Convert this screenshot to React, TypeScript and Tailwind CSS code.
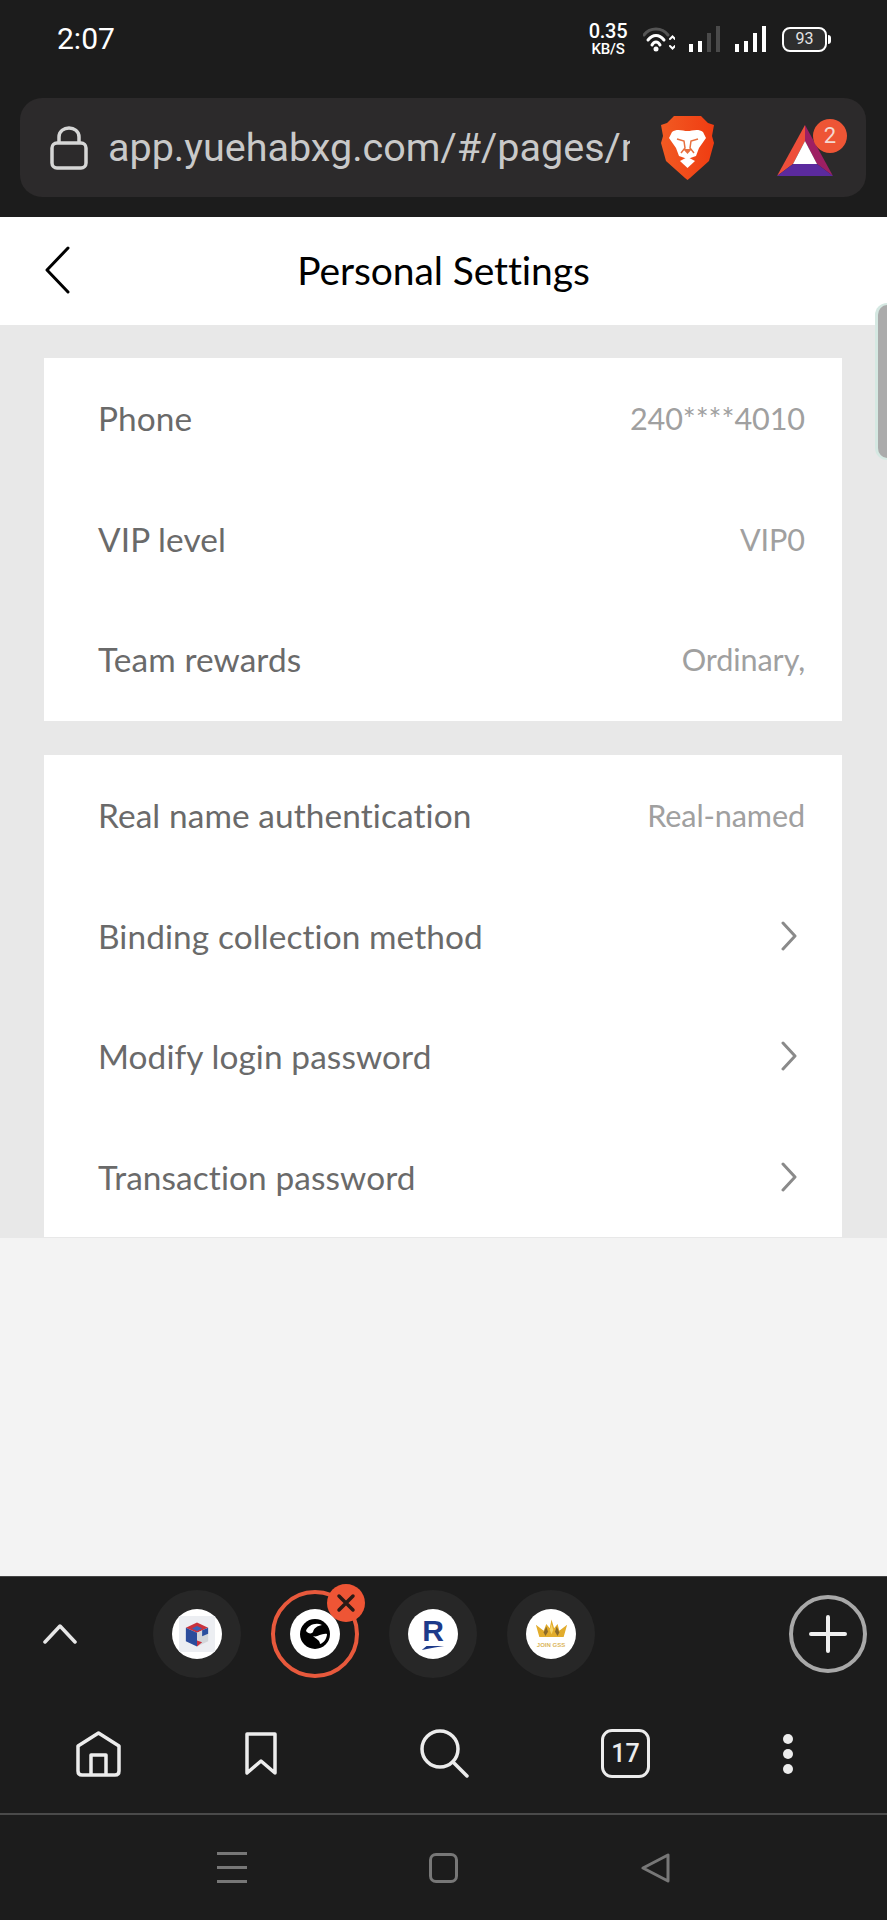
function Row({ label, value, arrow }: { label: string; value?: string; arrow?: boolean }) {
  return (
    <div className="flex h-[120.5px] items-center justify-between pl-[54px] pr-[37px]">
      <span className="text-[33.4px] tracking-[0.1px] text-[#6a6a6a]">{label}</span>
      {value && <span className="pt-[2px] text-[30.6px] tracking-[-0.1px] text-[#a0a0a0]">{value}</span>}
      {arrow && (
        <svg className="mr-[8px]" width="16" height="30" viewBox="0 0 16 30" fill="none" stroke="#8a8a8a" strokeWidth="3" strokeLinecap="round" strokeLinejoin="round">
          <path d="M2 2L14 15L2 28" />
        </svg>
      )}
    </div>
  );
}

function StatusIcons() {
  return (
    <div className="flex items-center">
      <div className="flex w-[42px] flex-col items-center font-['Roboto',sans-serif] font-medium leading-none text-white">
        <span className="h-[16px] text-[20px] leading-[16px] tracking-[-0.3px]">0.35</span>
        <span className="mt-[4px] h-[12px] text-[15px] leading-[12px] tracking-[-0.2px]">KB/S</span>
      </div>
      <svg className="ml-[14px]" width="32" height="26" viewBox="0 0 32 26" fill="none" strokeLinecap="round">
        <path d="M1 9C7 1 19 1 25 9" stroke="#555" strokeWidth="3" />
        <path d="M5 14C10 8 16 8 21 14" stroke="#fff" strokeWidth="3" />
        <path d="M9 19C11 15 15 15 17 19" stroke="#fff" strokeWidth="3" />
        <circle cx="13" cy="23" r="2.5" fill="#fff" />
        <path d="M27 13L29.5 10.5L32 13M27 20L29.5 22.5L32 20" stroke="#fff" strokeWidth="2" />
      </svg>
      <svg className="ml-[14px]" width="32" height="26" viewBox="0 0 32 26">
        <rect x="0" y="18" width="4" height="8" fill="#fff" />
        <rect x="9" y="15" width="4" height="11" fill="#fff" />
        <rect x="18" y="7" width="4" height="19" fill="#4a4a4a" />
        <rect x="27" y="0" width="4" height="26" fill="#4a4a4a" />
      </svg>
      <svg className="ml-[14px]" width="32" height="26" viewBox="0 0 32 26">
        <rect x="0" y="18" width="4" height="8" fill="#fff" />
        <rect x="9" y="15" width="4" height="11" fill="#fff" />
        <rect x="18" y="7" width="4" height="19" fill="#fff" />
        <rect x="27" y="0" width="4" height="26" fill="#fff" />
      </svg>
      <div className="ml-[15px] flex items-center">
        <div className="flex h-[25px] w-[45px] items-center justify-center rounded-[8px] border-2 border-white bg-[#2e2e2e] font-['Roboto',sans-serif] text-[16px] leading-none text-[#e4e4e4]">
          93
        </div>
        <div className="ml-[1px] h-[9px] w-[3px] rounded-r-sm bg-white" />
      </div>
    </div>
  );
}

function BraveLogo() {
  return (
    <svg width="55" height="65" viewBox="0 0 55 65">
      <defs>
        <linearGradient id="brave" x1="0" y1="0" x2="1" y2="0">
          <stop offset="0" stopColor="#f15a22" />
          <stop offset="1" stopColor="#f03c12" />
        </linearGradient>
      </defs>
      <path d="M14 1H41L48 8L54 10L52 21L54 28L49 46L30 63L27.5 65L25 63L6 46L1 28L3 21L1 10L7 8Z" fill="url(#brave)" />
      <path d="M12 17C17 13 23 16 27.5 16C32 16 38 13 43 17L46 23L39 33L36 41L27.5 44L19 41L16 33L9 23Z" fill="#fff" />
      <path d="M17 24L24 26L25 33L21 38M38 24L31 26L30 33L34 38" fill="none" stroke="#e8703f" strokeWidth="1.5" />
      <path d="M23 34H32L27.5 39Z" fill="#e8703f" />
      <path d="M20 46L27.5 42L35 46L27.5 53Z" fill="#fff" />
    </svg>
  );
}

function BatLogo() {
  return (
    <svg width="56" height="51" viewBox="0 0 56 51">
      <path d="M28 0L0 51L16 39L28 16Z" fill="#ee4e3a" />
      <path d="M28 0L56 51L40 39L28 16Z" fill="#9e1f63" />
      <path d="M0 51H56L40 39H16Z" fill="#5b2a9e" />
      <path d="M28 16L16 39H40Z" fill="#fff" />
    </svg>
  );
}

function CubeFavicon() {
  return (
    <div className="flex h-[36px] w-[36px] items-center justify-center bg-[#eceef2]">
      <svg width="24" height="27" viewBox="0 0 28 30">
        <path d="M14 1L27 7L14 13L1 7Z" fill="#c9323d" />
        <path d="M1 7L14 13V29L1 23Z" fill="#2b4c9c" />
        <path d="M27 7L14 13V29L27 23Z" fill="#d3d6da" />
        <path d="M8 8L14 5L20 8L14 11Z" fill="#3a62b8" />
        <path d="M20 10L27 7V14L20 17Z" fill="#2b4f9e" />
        <path d="M14 22L20 24L14 29Z" fill="#c9323d" />
      </svg>
    </div>
  );
}

function GlobeFavicon() {
  return (
    <svg width="32" height="32" viewBox="0 0 32 32">
      <circle cx="16" cy="16" r="15" fill="#000" />
      <path d="M7 13C9 7 17 4 23 7C18 8 15 10 14 14C13 16 9 16 7 13Z" fill="#fff" />
      <path d="M14 18C18 20 22 15 28 16C28 20 25 25 21 26C21 22 17 21 14 18Z" fill="#fff" />
    </svg>
  );
}

function RFavicon() {
  return (
    <div className="flex flex-col items-center">
      <span className="font-['Liberation_Sans',sans-serif] text-[30px] font-bold leading-[26px] text-[#1d3a8a]">R</span>
      <svg className="mt-[2px]" width="24" height="4" viewBox="0 0 28 5">
        <path d="M0 5L6 0H28L16 2Z" fill="#1d3a8a" />
      </svg>
    </div>
  );
}

function CrownFavicon() {
  return (
    <div className="flex flex-col items-center">
      <svg width="33" height="22" viewBox="0 0 38 24">
        <path d="M5 20L1 6L10 13L13 5L17 10L19 0L22 10L26 5L28 13L37 6L33 20Z" fill="#e2ac2c" />
        <path d="M17 12L19 5L21 12L19 17Z" fill="#f7d568" />
        <path d="M10 15L13 8L15 14L12 19Z" fill="#8a6a2a" />
        <path d="M28 15L25 8L23 14L26 19Z" fill="#8a6a2a" />
      </svg>
      <span className="font-['Liberation_Sans',sans-serif] text-[6px] font-bold leading-[8px] text-[#dcb65a]">JOIN GSS</span>
    </div>
  );
}

function TabBubble({ active, children }: { active?: boolean; children: React.ReactNode }) {
  return (
    <div
      className={
        active
          ? 'relative flex h-[88px] w-[88px] items-center justify-center rounded-full border-[4px] border-[#e8593c]'
          : 'relative flex h-[88px] w-[88px] items-center justify-center rounded-full bg-[#272727]'
      }
    >
      <div className="flex h-[50px] w-[50px] items-center justify-center overflow-hidden rounded-full bg-white">{children}</div>
      {active && (
        <div className="absolute -right-[10px] -top-[10px] flex h-[38px] w-[38px] items-center justify-center rounded-full bg-[#ee5535]">
          <svg width="20" height="20" viewBox="0 0 20 20" stroke="#2a1a16" strokeWidth="3.5" strokeLinecap="round">
            <path d="M3 3L17 17M17 3L3 17" />
          </svg>
        </div>
      )}
    </div>
  );
}

export default function App() {
  return (
    <div className="relative flex h-[1920px] w-[887px] flex-col overflow-hidden bg-[#1c1c1c] font-['Lato',sans-serif]">
      {/* Status bar + address bar */}
      <div className="h-[217px] shrink-0 px-[20px]">
        <div className="flex h-[78px] items-center justify-between pl-[37px]">
          <span className="font-['Roboto',sans-serif] text-[30px] leading-none text-white">2:07</span>
          <div className="mr-[36px]">
            <StatusIcons />
          </div>
        </div>
        <div className="mt-[20px] flex h-[99px] w-[846px] items-center rounded-[22px] bg-[#2c2a2b]">
          <svg className="ml-[30px] shrink-0" width="38" height="44" viewBox="0 0 38 44" fill="none" stroke="#d6d6d6" strokeWidth="3.5">
            <rect x="2" y="17" width="34" height="25" rx="5" />
            <path d="M9 17V11C9 -1 29 -1 29 11V17" />
          </svg>
          <div className="ml-[20px] w-[522px] overflow-hidden whitespace-nowrap font-['Roboto',sans-serif] text-[39.5px] leading-[50px] text-[#c9c9c9]">
            app.yuehabxg.com/#/pages/m
          </div>
          <div className="ml-[30px] shrink-0">
            <BraveLogo />
          </div>
          <div className="relative ml-[62px] mt-[6px] shrink-0">
            <BatLogo />
            <div className="absolute -right-[14px] -top-[6px] flex h-[34px] w-[34px] items-center justify-center rounded-full bg-[#ee5535] font-['Roboto',sans-serif] text-[22px] leading-none text-[#f5d8d0]">
              2
            </div>
          </div>
        </div>
      </div>

      {/* Page header */}
      <div className="relative flex h-[108px] shrink-0 items-center justify-center bg-white pb-[2px]">
        <svg className="absolute left-[44px] top-[29px]" width="26" height="48" viewBox="0 0 26 48" fill="none" stroke="#000" strokeWidth="3" strokeLinecap="round" strokeLinejoin="round">
          <path d="M24 2L3 24L24 46" />
        </svg>
        <span className="text-[39px] leading-none tracking-[-0.1px] text-black">Personal Settings</span>
      </div>

      {/* Settings cards */}
      <div className="h-[913px] shrink-0 overflow-hidden bg-[#e8e8e8] pl-[44px] pr-[45px] pt-[33px]">
        <div className="bg-white pb-[1.5px]">
          <Row label="Phone" value="240****4010" />
          <Row label="VIP level" value="VIP0" />
          <Row label="Team rewards" value="Ordinary," />
        </div>
        <div className="mt-[34px] bg-white">
          <Row label="Real name authentication" value="Real-named" />
          <Row label="Binding collection method" arrow />
          <Row label="Modify login password" arrow />
          <Row label="Transaction password" arrow />
        </div>
      </div>

      {/* Blank area under the page */}
      <div className="h-[338px] shrink-0 bg-[#f3f3f3]" />

      {/* Tab strip */}
      <div className="flex h-[118px] shrink-0 items-center border-t border-[#444] pb-[3px]">
        <svg className="ml-[43px]" width="34" height="20" viewBox="0 0 34 20" fill="none" stroke="#e6e6e6" strokeWidth="3.5" strokeLinecap="round" strokeLinejoin="round">
          <path d="M2 18L17 2L32 18" />
        </svg>
        <div className="ml-[76px] flex gap-[30px]">
          <TabBubble>
            <CubeFavicon />
          </TabBubble>
          <TabBubble active>
            <GlobeFavicon />
          </TabBubble>
          <TabBubble>
            <RFavicon />
          </TabBubble>
          <TabBubble>
            <CrownFavicon />
          </TabBubble>
        </div>
        <div className="ml-[194px] flex h-[78px] w-[78px] items-center justify-center rounded-full border-[4px] border-[#a8a8a8]">
          <svg width="40" height="40" viewBox="0 0 40 40" stroke="#f0f0f0" strokeWidth="4" strokeLinecap="round">
            <path d="M20 3V37M3 20H37" />
          </svg>
        </div>
      </div>

      {/* Browser toolbar */}
      <div className="flex h-[119px] shrink-0 items-center">
        <svg className="ml-[76px]" width="45" height="46" viewBox="0 0 45 46" fill="none" stroke="#ececec" strokeWidth="3.5" strokeLinejoin="round">
          <path d="M2 15L22.5 2L43 15V40C43 43 41 44 39 44H6C4 44 2 43 2 40Z" />
          <path d="M15 44V24H30V44" />
        </svg>
        <svg className="ml-[124px]" width="32" height="44" viewBox="0 0 32 44" fill="none" stroke="#ececec" strokeWidth="3.5" strokeLinejoin="round">
          <path d="M2 2H30V41L16 29L2 41Z" />
        </svg>
        <svg className="ml-[143px]" width="49" height="49" viewBox="0 0 49 49" fill="none" stroke="#ececec" strokeWidth="3.5" strokeLinecap="round">
          <circle cx="20" cy="20" r="18" />
          <path d="M33 33L47 47" />
        </svg>
        <div className="ml-[132px] flex h-[49px] w-[49px] items-center justify-center rounded-[11px] border-[3.5px] border-[#ececec] font-['Roboto',sans-serif] text-[25px] font-medium leading-none text-[#ececec]">
          17
        </div>
        <div className="ml-[133px] flex flex-col gap-[5px]">
          <div className="h-[10px] w-[10px] rounded-full bg-[#ececec]" />
          <div className="h-[10px] w-[10px] rounded-full bg-[#ececec]" />
          <div className="h-[10px] w-[10px] rounded-full bg-[#ececec]" />
        </div>
      </div>

      <div className="h-[2px] shrink-0 bg-[#4a4a4a]" />

      {/* System navigation */}
      <div className="flex flex-1 items-center">
        <div className="ml-[217px] flex w-[30px] flex-col gap-[11px]">
          <div className="h-[3px] bg-[#777]" />
          <div className="h-[3px] bg-[#777]" />
          <div className="h-[3px] bg-[#777]" />
        </div>
        <div className="ml-[182px] h-[30px] w-[29px] rounded-[7px] border-[3px] border-[#777]" />
        <svg className="ml-[183px]" width="29" height="30" viewBox="0 0 29 30" fill="none" stroke="#777" strokeWidth="3" strokeLinejoin="round">
          <path d="M27 2V28L2 15Z" />
        </svg>
      </div>

      {/* Floating side handle */}
      <div className="absolute right-0 top-[303px] h-[157px] w-[12px] rounded-l-[12px] border-y-2 border-l-[3px] border-[#d5e8e2] bg-[#ababab]" />
    </div>
  );
}
